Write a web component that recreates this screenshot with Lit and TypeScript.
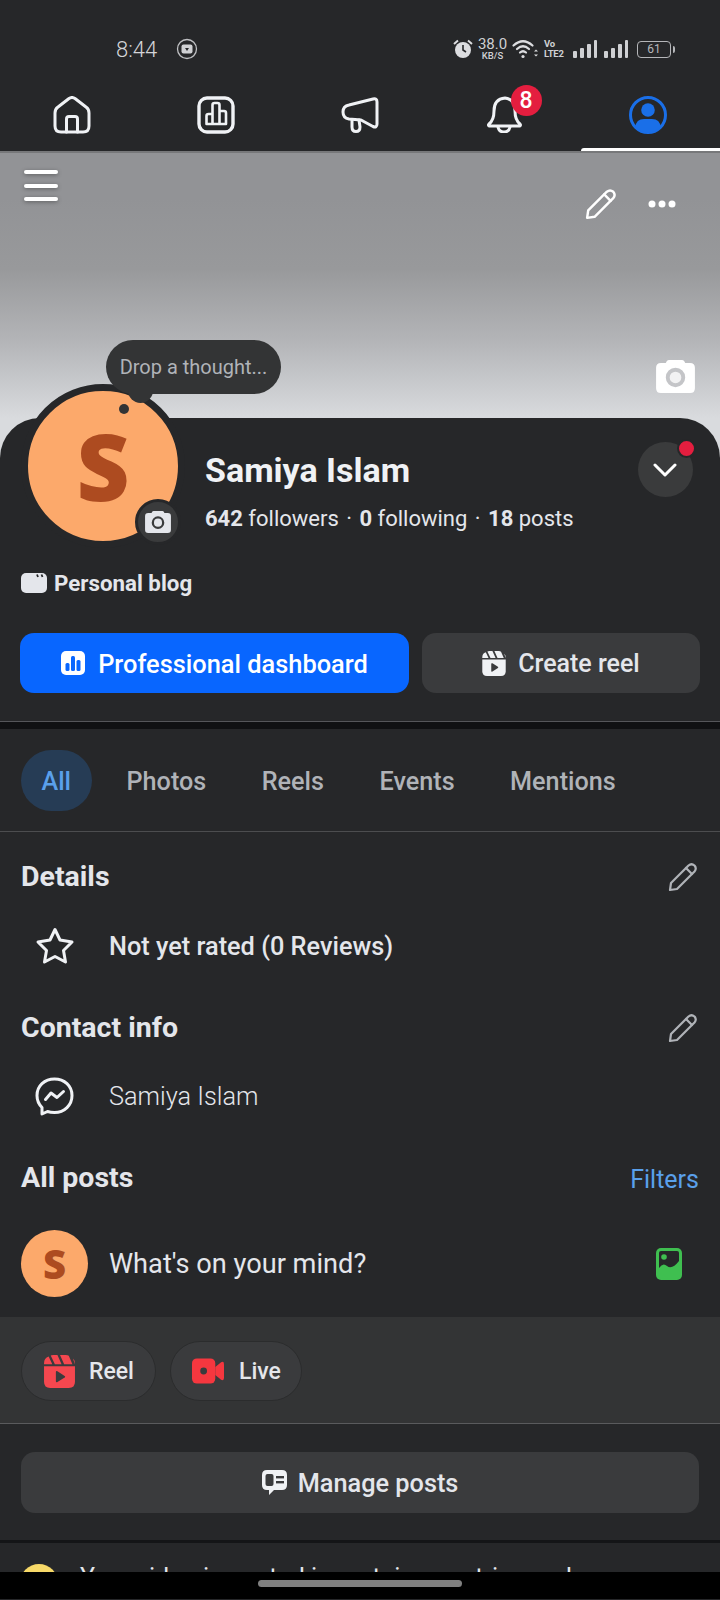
import { LitElement, html, css } from "lit";
import { customElement } from "lit/decorators.js";

const pencil = (size: number, color: string, sw: number) => html`<svg width=${size} height=${size} viewBox="0 0 30 30" fill="none" stroke=${color} stroke-width=${sw} stroke-linejoin="round" stroke-linecap="round"><path d="M2 28 L3 21 L20.5 3.5 Q23.5 1 26.5 3.5 Q29 6.5 26.5 9.5 L9 27 Z"/><path d="M18 6 L24 12"/></svg>`;

const camera = (w: number, h: number, body: string, ring: string, center: string, sw: number) => html`<svg width=${w} height=${h} viewBox="0 0 40 34"><path fill=${body} d="M13 0 H27 Q29 0 30 3 H35 Q40 3 40 8 V29 Q40 34 35 34 H5 Q0 34 0 29 V8 Q0 3 5 3 H10 Q11 0 13 0Z"/><circle cx="20" cy="18" r="8" fill=${center} stroke=${ring} stroke-width=${sw}/></svg>`;

const reel = (w: number, h: number, fill: string, hole: string) => html`<svg width=${w} height=${h} viewBox="0 0 30 32"><path fill=${fill} d="M0 11 H30 V26 Q30 32 24 32 H6 Q0 32 0 26Z"/><path fill=${fill} d="M0 9 V8 Q0 3 4.5 1.5 L8 9Z M10.5 9 L6.5 .5 Q7 0 9 0 H13 L17 9Z M19.5 9 L15.5 0 H21 Q23 0 24 .8 L27.5 9Z M30 9 V8 Q30 5 28 3.5 L30 9Z"/><path fill=${hole} d="M11.5 16.5 Q11.5 15 13 15.8 L20 20.3 Q21 21 20 21.8 L13 26.2 Q11.5 27 11.5 25.5Z"/></svg>`;

@customElement("app-root")
export class AppRoot extends LitElement {
  static styles = css`
    :host { display: block; width: 720px; height: 1600px; overflow: hidden; background: #262729; color: #e4e6eb; font-family: Roboto, "Liberation Sans", sans-serif; }
    svg { display: block; flex: none; }
    .status { height: 78px; box-sizing: border-box; padding: 20px 45px 0 116px; display: flex; align-items: center; color: #cfd0d3; }
    .time { font-size: 22px; font-weight: 300; width: 60px; color: #d4d5d8; }
    .status-right { margin-left: auto; display: flex; align-items: center; }
    .speed { display: flex; flex-direction: column; align-items: center; width: 29px; margin: 0 5px 0 5px; line-height: 11px; }
    .speed b { font-size: 15px; font-weight: 400; line-height: 13px; }
    .speed i { font-size: 9.5px; font-style: normal; font-weight: 500; line-height: 9px; }
    .volte { display: flex; flex-direction: column; width: 24px; margin: 0 5px 0 6px; font-size: 9.5px; font-weight: 700; line-height: 10px; letter-spacing: -.3px; }
    .sig { margin-right: 7px; }
    .sig.last-sig { margin-right: 9px; }
    .batt { position: relative; width: 34px; height: 17px; border: 1.5px solid #b5b6b9; border-radius: 4px; box-sizing: border-box; font-size: 12px; line-height: 14px; text-align: center; color: #b5b6b9; margin-right: 2px; }
    .batt-tip { width: 2px; height: 7px; background: #b5b6b9; border-radius: 0 2px 2px 0; }
    .tabs { height: 73px; display: flex; }
    .tab { position: relative; width: 144px; display: flex; align-items: center; justify-content: center; }
    .tab.on::after { content: ""; position: absolute; left: 5px; right: -2px; bottom: 0; height: 3px; background: #fff; border-radius: 3px 3px 0 0; }
    .badge { position: absolute; left: 78.5px; top: 7px; width: 31px; height: 31px; border-radius: 50%; background: #e41e3f; color: #fff; font-size: 23px; font-weight: 500; line-height: 31px; text-align: center; }
    .cover { position: relative; height: 307px; box-sizing: border-box; border-top: 2px solid #77787a; background: linear-gradient(#929396 0, #929396 15%, #98999b 38%, #b4b5b8 62%, #d9dbde 87%, #d9dbde 100%); padding: 17px 44px 0 24px; display: flex; align-items: flex-start; }
    .burger { display: flex; flex-direction: column; gap: 9.5px; filter: drop-shadow(0 1px 2px rgba(0,0,0,.35)); }
    .burger span { display: block; width: 34px; height: 4px; border-radius: 2px; background: #fff; }
    .cover-pencil { margin: 18px 31px 0 auto; }
    .cover-dots { margin-top: 30px; }
    .cover-cam { position: absolute; right: 25px; top: 207px; }
    .card { position: relative; margin-top: -40px; background: #262729; border-radius: 40px 40px 0 0; padding: 0 20px 28px; height: 304px; box-sizing: border-box; border-bottom: 1px solid #55565a; }
    .head { display: flex; height: 130px; align-items: flex-start; }
    .avatar-wrap { position: relative; margin: -34px 20px 0 1px; width: 164px; height: 164px; flex: none; }
    .avatar { width: 164px; height: 164px; box-sizing: border-box; border: 7px solid #262729; border-radius: 50%; background: #fca96b; color: #ad4b20; font-family: "Open Sans", sans-serif; font-weight: 800; font-size: 92px; display: flex; align-items: center; justify-content: center; line-height: 1; }
    .bubble { position: absolute; left: 85px; top: -44px; width: 175px; height: 54px; border-radius: 27px; background: #333435; color: #b0b3b8; font-size: 20px; line-height: 54px; text-align: center; }
    .tail { position: absolute; left: 107px; top: 0; width: 25px; height: 19px; border-radius: 0 0 13px 13px; background: #333435; }
    .dot { position: absolute; left: 98px; top: 20px; width: 10px; height: 10px; border-radius: 50%; background: #333435; }
    .av-cam { position: absolute; left: 114px; top: 115px; width: 40px; height: 40px; border: 3px solid #262729; border-radius: 50%; background: #3a3b3c; display: flex; align-items: center; justify-content: center; }
    .who { padding-top: 32px; }
    .name { font-size: 34px; font-weight: 700; line-height: 40px; color: #f0f2f5; }
    .stats { margin-top: 14px; font-size: 22px; line-height: 30px; color: #e4e6eb; white-space: nowrap; }
    .stats b { font-weight: 700; }
    .stats .sep { margin: 0 2px; }
    .chev { position: relative; margin: 24px 7.5px 0 auto; width: 55px; height: 55px; border-radius: 50%; background: #3a3b3c; display: flex; align-items: center; justify-content: center; flex: none; }
    .chev i { position: absolute; right: -1px; top: -1px; width: 15px; height: 15px; border-radius: 50%; background: #e41e3f; border: 2px solid #262729; box-sizing: content-box; margin: -2px; }
    .blog { margin: 20px 0 0 1px; height: 30px; display: flex; align-items: center; gap: 7px; font-size: 22.3px; font-weight: 700; }
    .btns { margin-top: 35px; display: flex; gap: 13px; }
    .btn { height: 60px; border-radius: 14px; background: #3a3b3d; display: flex; align-items: center; justify-content: center; gap: 12px; font-size: 25px; font-weight: 500; }
    .btn span { margin-top: 1px; }
    .btn.pri { width: 389px; background: #0866ff; color: #fff; font-size: 25.4px; gap: 13px; }
    .btn.sec { width: 278px; }
    .band { height: 7px; background: #101113; }
    .chips { height: 103px; box-sizing: border-box; border-bottom: 1px solid #4c4d4f; padding: 21px 0 0 21px; display: flex; gap: 14.5px; align-items: flex-start; }
    .chip { height: 61px; line-height: 63px; padding: 0 20.5px; border-radius: 31px; font-size: 25.2px; font-weight: 500; color: #b0b3b8; }
    .chip.on { background: #263c55; color: #5aa0eb; }
    .hd { height: 40px; padding: 0 21px; display: flex; align-items: center; justify-content: space-between; font-size: 28.5px; font-weight: 700; line-height: 40px; }
    .hd a { font-size: 25px; font-weight: 400; color: #5aa0eb; margin-top: 3px; }
    .row { height: 60px; display: flex; align-items: center; font-size: 25.3px; }
    .row .ic { width: 109px; display: flex; justify-content: center; flex: none; box-sizing: border-box; }
    .med { font-weight: 500; }
    .lite { font-weight: 300; }
    .sec-a { margin-top: 25px; }
    .sec-b { margin-top: 32px; }
    .sec-c { margin-top: 32px; }
    .gap { margin-top: 18px; }
    .gap.first { margin-top: 19px; }
    .pencil-slot { margin-right: 1px; }
    .post { height: 119px; box-sizing: border-box; padding: 32px 38px 20px 21px; display: flex; align-items: center; font-size: 27.2px; font-weight: 400; }
    .post span { margin-top: 1px; }
    .mini { width: 67px; height: 67px; border-radius: 50%; background: #fca96b; color: #ad4b20; font-family: "Open Sans", sans-serif; font-weight: 800; font-size: 40px; display: flex; align-items: center; justify-content: center; margin-right: 21px; flex: none; }
    .post svg { margin-left: auto; }
    .grey { height: 107px; box-sizing: border-box; background: #333435; border-bottom: 1px solid #5a5b5d; padding: 24px 0 0 21px; display: flex; gap: 14px; align-items: flex-start; }
    .pill { height: 60px; box-sizing: border-box; border: 1.5px solid #2b2c2d; border-radius: 30px; background: #3a3b3d; display: flex; align-items: center; font-size: 23px; font-weight: 500; }
    .pill.a { width: 135px; padding-left: 22px; gap: 14px; }
    .pill.b { width: 132px; padding-left: 21px; gap: 15px; }
    .manage-wrap { height: 116px; box-sizing: border-box; padding: 28px 21px 0; }
    .manage { height: 61px; border-radius: 14px; background: #3a3b3d; display: flex; align-items: center; justify-content: center; gap: 11px; font-size: 25.3px; font-weight: 500; }
    .manage span { margin-top: 1px; }
    .thin { height: 3px; background: #141517; }
    .last { height: 29px; overflow: hidden; display: flex; padding: 20px 0 0 20px; box-sizing: border-box; gap: 22px; font-size: 25px; line-height: 30px; white-space: nowrap; }
    .yel { width: 38px; height: 38px; border-radius: 50%; background: #f7d968; margin-top: 1px; flex: none; }
    .nav { height: 27px; background: #000; display: flex; justify-content: center; padding-top: 8px; box-sizing: border-box; }
    .nav span { display: block; width: 204px; height: 7px; border-radius: 4px; background: #808080; }
  `;

  render() {
    return html`
      <div class="status">
        <span class="time">8:44</span>
        <svg width="22" height="22" viewBox="0 0 22 22"><circle cx="11" cy="11" r="9.5" fill="none" stroke="#bfc0c3" stroke-width="1.3"/><rect x="5.5" y="6.5" width="11" height="9" rx="2" fill="#d0d1d4"/><path d="M9 10 h4 l-2 3z" fill="#262729"/></svg>
        <div class="status-right">
          <svg width="20" height="20" viewBox="0 0 20 20" fill="#dcdde0"><circle cx="10" cy="11" r="8"/><path d="M1 5 L5 1.5 M15 1.5 L19 5" stroke="#dcdde0" stroke-width="2"/><path d="M10 6 V11 L13 13" stroke="#262729" stroke-width="1.6" fill="none"/></svg>
          <div class="speed"><b>38.0</b><i>KB/S</i></div>
          <svg width="26" height="20" viewBox="0 0 26 20" fill="none" stroke="#dcdde0" stroke-width="2.2" stroke-linecap="round"><path d="M1.5 6.5 Q11 -2 20.5 6.5"/><path d="M5 10 Q11 4.5 17 10"/><path d="M8 13.5 Q11 11 14 13.5"/><circle cx="11" cy="17.5" r="1.6" fill="#dcdde0" stroke="none"/><path d="M22 12.5 l2 -2 l2 2z M22 15.5 l2 2 l2 -2z" fill="#dcdde0" stroke="none"/></svg>
          <div class="volte"><span>Vo</span><span>LTE2</span></div>
          <svg class="sig" width="24" height="18" viewBox="0 0 24 18" fill="#cfd0d3"><rect x="0" y="11" width="4" height="7" rx="1"/><rect x="7" y="8" width="4" height="10" rx="1"/><rect x="14" y="4" width="4" height="14" rx="1"/><rect x="21" y="0" width="3" height="18" rx="1"/></svg>
          <svg class="sig last-sig" width="24" height="18" viewBox="0 0 24 18" fill="#cfd0d3"><rect x="0" y="11" width="4" height="7" rx="1"/><rect x="7" y="8" width="4" height="10" rx="1"/><rect x="14" y="4" width="4" height="14" rx="1"/><rect x="21" y="0" width="3" height="18" rx="1"/></svg>
          <div class="batt">61</div><div class="batt-tip"></div>
        </div>
      </div>

      <div class="tabs">
        <div class="tab">
          <svg width="38" height="38" viewBox="0 0 38 38" fill="none" stroke="#f0f2f5" stroke-width="3" stroke-linejoin="round" stroke-linecap="round"><path d="M2 17 Q2 13 5 11 L16 2.5 Q19 .5 22 2.5 L33 11 Q36 13 36 17 V30 Q36 36 30 36 H8 Q2 36 2 30 Z"/><path d="M13.5 36 V23 Q13.5 20.5 16 20.5 H22 Q24.5 20.5 24.5 23 V36"/></svg>
        </div>
        <div class="tab">
          <svg width="38" height="38" viewBox="0 0 38 38" fill="none" stroke="#f0f2f5" stroke-width="3" stroke-linejoin="round"><rect x="2" y="2" width="34" height="34" rx="8" stroke-width="3.4"/><path stroke-width="2.6" d="M9.5 28 V20 Q9.5 18 11.5 18 H15.5 V9 Q15.5 7 17.5 7 H20.5 Q22.5 7 22.5 9 V15 H27 Q29 15 29 17 V28 Z M15.5 18 V28 M22.5 15 V28"/></svg>
        </div>
        <div class="tab">
          <svg width="38" height="36" viewBox="0 0 38 36" fill="none" stroke="#f0f2f5" stroke-width="3" stroke-linejoin="round" stroke-linecap="round"><path d="M8 8 L32 2 Q36 1 36 5 V27 Q36 31 32 29.5 L20 23 L8 22 Q2 21 2 15 Q2 9 8 8 Z"/><path d="M11 22.5 V30 Q11 34.5 15 34.5 Q19 34.5 19 30 L18 23"/></svg>
        </div>
        <div class="tab">
          <svg width="36" height="37" viewBox="0 0 36 37" fill="none" stroke="#f0f2f5" stroke-width="3" stroke-linejoin="round" stroke-linecap="round"><path d="M3 30 Q2 29 3 28 Q8 24 8 15 Q8 3 19 2 Q29 3 29 15 Q29 24 34 28 Q35 29 34 30 Z"/><path d="M12 31 Q13 36 18 36 Q23 36 24 31"/></svg>
          <span class="badge">8</span>
        </div>
        <div class="tab on">
          <svg width="38" height="38" viewBox="0 0 38 38"><circle cx="19" cy="19" r="17.5" fill="none" stroke="#1a6fe8" stroke-width="3"/><circle cx="19" cy="14" r="6.8" fill="#1a6fe8"/><path fill="#1a6fe8" d="M6.5 31 Q7 23 15 23 H23 Q31 23 31.5 31 Q26.5 36.5 19 36.5 Q11.5 36.5 6.5 31Z"/></svg>
        </div>
      </div>

      <div class="cover">
        <div class="burger"><span></span><span></span><span></span></div>
        <div class="cover-pencil">${pencil(32, "#ffffff", 2.3)}</div>
        <svg class="cover-dots" width="28" height="8" viewBox="0 0 28 8" fill="#fff"><circle cx="4" cy="4" r="3.5"/><circle cx="14" cy="4" r="3.5"/><circle cx="24" cy="4" r="3.5"/></svg>
        <div class="cover-cam">${camera(39, 33, "#ffffff", "#c4c5c8", "#f2f2f3", 4)}</div>
      </div>

      <div class="card">
        <div class="head">
          <div class="avatar-wrap">
            <div class="avatar">S</div>
            <div class="bubble">Drop a thought...</div>
            <div class="tail"></div>
            <div class="dot"></div>
            <div class="av-cam">${camera(26, 22, "#e4e6eb", "#3a3b3c", "#e4e6eb", 3.5)}</div>
          </div>
          <div class="who">
            <div class="name">Samiya Islam</div>
            <div class="stats"><b>642</b> followers <span class="sep">·</span> <b>0</b> following <span class="sep">·</span> <b>18</b> posts</div>
          </div>
          <div class="chev">
            <svg width="24" height="14" viewBox="0 0 24 14" fill="none" stroke="#fff" stroke-width="3" stroke-linecap="round" stroke-linejoin="round"><path d="M2 2 L12 12 L22 2"/></svg>
            <i></i>
          </div>
        </div>
        <div class="blog">
          <svg width="26" height="20" viewBox="0 0 26 20"><rect width="26" height="20" rx="5" fill="#e4e6eb"/><path d="M16 1.5 L17 4 M20.5 1.5 L21.5 4" stroke="#262729" stroke-width="1.8"/></svg>
          <span>Personal blog</span>
        </div>
        <div class="btns">
          <div class="btn pri">
            <svg width="24" height="24" viewBox="0 0 24 24"><rect width="24" height="24" rx="5" fill="#fff"/><rect x="4.5" y="12" width="4" height="8" rx="1.5" fill="#0866ff"/><rect x="10" y="5" width="4" height="15" rx="1.5" fill="#0866ff"/><rect x="15.5" y="9" width="4" height="11" rx="1.5" fill="#0866ff"/></svg>
            <span>Professional dashboard</span>
          </div>
          <div class="btn sec">
            ${reel(24, 25, "#f0f2f5", "#3a3b3d")}
            <span>Create reel</span>
          </div>
        </div>
      </div>

      <div class="band"></div>
      <div class="chips">
        <span class="chip on">All</span>
        <span class="chip">Photos</span>
        <span class="chip">Reels</span>
        <span class="chip">Events</span>
        <span class="chip">Mentions</span>
      </div>

      <div class="hd sec-a"><span>Details</span><span class="pencil-slot">${pencil(30, "#b0b3b8", 2.2)}</span></div>
      <div class="row gap first med">
        <div class="ic"><svg width="40" height="38" viewBox="0 0 40 38" fill="none" stroke="#f0f2f5" stroke-width="3" stroke-linejoin="round"><path d="M20 2.5 L25 13 L37 15 L28.5 23.5 L30.5 35 L20 29.5 L9.5 35 L11.5 23.5 L3 15 L15 13 Z"/></svg></div>
        <span>Not yet rated (0 Reviews)</span>
      </div>
      <div class="hd sec-b"><span>Contact info</span><span class="pencil-slot">${pencil(30, "#b0b3b8", 2.2)}</span></div>
      <div class="row gap lite">
        <div class="ic"><svg width="39" height="39" viewBox="0 0 39 39" fill="none" stroke="#f0f2f5" stroke-width="3" stroke-linejoin="round" stroke-linecap="round"><path d="M19.5 2 C9.5 2 2 9 2 18.5 C2 23.5 4 27.5 7 30.5 V37 L12.5 34.5 C14.5 35.2 17 35.5 19.5 35.5 C29.5 35.5 37 28 37 18.5 C37 9 29.5 2 19.5 2 Z"/><path d="M10.5 22.5 L16 16 L22 20.5 L28.5 14.5"/></svg></div>
        <span>Samiya Islam</span>
      </div>
      <div class="hd sec-c"><span>All posts</span><a>Filters</a></div>
      <div class="post">
        <div class="mini">S</div>
        <span>What's on your mind?</span>
        <svg width="26" height="32" viewBox="0 0 26 32"><rect width="26" height="32" rx="5" fill="#3fbf50"/><rect x="3" y="3" width="20" height="20" rx="2" fill="#262729"/><circle cx="8" cy="9" r="2.8" fill="#3fbf50"/><path fill="#3fbf50" d="M3 20 Q7 14 11 18 Q16 22 23 13 V24 H3Z"/></svg>
      </div>
      <div class="grey">
        <div class="pill a">
          ${reel(31, 33, "#f5474f", "#3a3b3d")}
          <span>Reel</span>
        </div>
        <div class="pill b">
          <svg width="32" height="26" viewBox="0 0 33 26"><rect width="24" height="26" rx="5" fill="#f5373f"/><path fill="#f5373f" d="M24 9 L30 4 Q33 2.5 33 6 V20 Q33 23.5 30 22 L24 17Z"/><circle cx="12" cy="13" r="3.5" fill="#3a3b3d"/></svg>
          <span>Live</span>
        </div>
      </div>
      <div class="manage-wrap">
        <div class="manage">
          <svg width="25" height="25" viewBox="0 0 25 25"><path fill="#f0f2f5" d="M5 0 H20 Q25 0 25 5 V15 Q25 20 20 20 H12 L7 25 V20 H5 Q0 20 0 15 V5 Q0 0 5 0Z"/><rect x="3.5" y="4" width="8" height="12" rx="2" fill="#3a3b3d"/><rect x="14" y="6" width="8" height="2.4" fill="#3a3b3d"/><rect x="14" y="11" width="8" height="2.4" fill="#3a3b3d"/></svg>
          <span>Manage posts</span>
        </div>
      </div>
      <div class="thin"></div>
      <div class="last"><div class="yel"></div><span>Your video is posted in certain countries and</span></div>
      <div class="nav"><span></span></div>
    `;
  }
}
